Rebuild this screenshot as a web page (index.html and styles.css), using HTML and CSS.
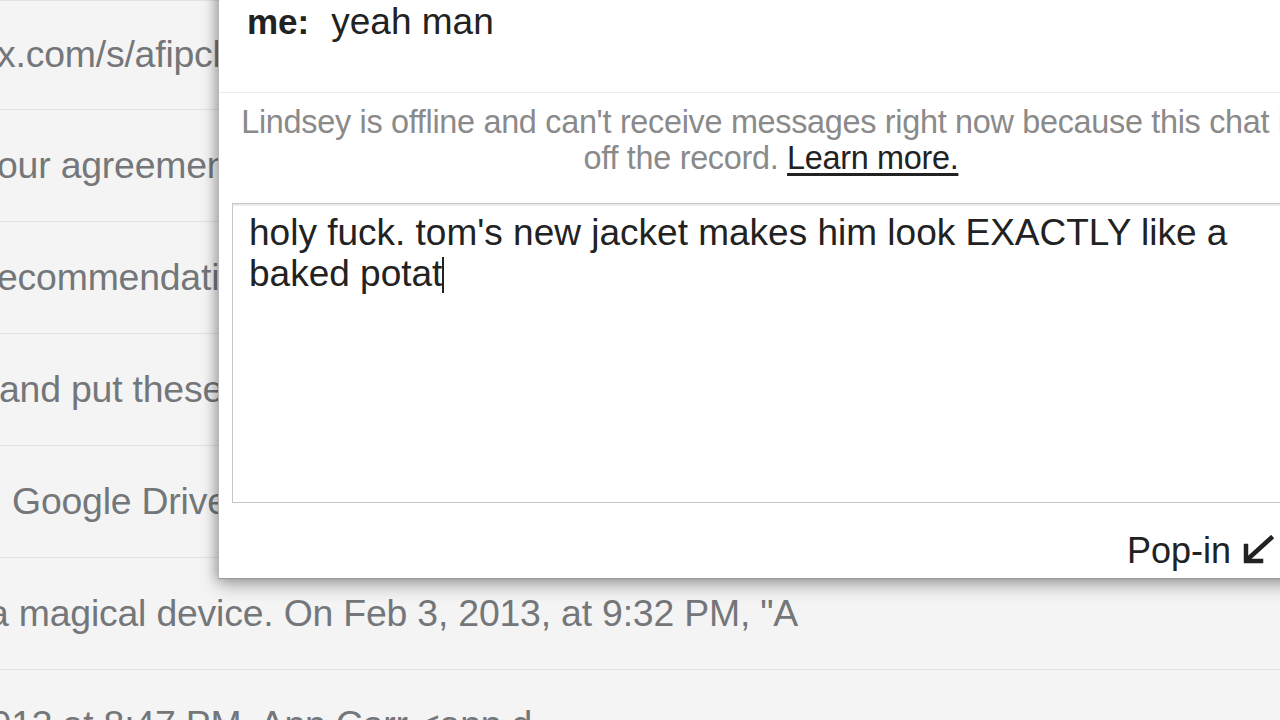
FILE: index.html
```html
<!DOCTYPE html>
<html lang="en">
<head>
<meta charset="utf-8">
<title>Chat</title>
<link rel="stylesheet" href="styles.css">
</head>
<body>
<div class="inbox">
  <div class="row row-first"><span class="snippet s1">x.com/s/afipcle8dkj2</span></div>
  <div class="row"><span class="snippet s2">our agreement with us</span></div>
  <div class="row"><span class="snippet s3">ecommendations for you</span></div>
  <div class="row"><span class="snippet s4">and put these in the folder</span></div>
  <div class="row"><span class="snippet s5">Google Drive</span></div>
  <div class="row"><span class="snippet s6">a magical device. On Feb 3, 2013, at 9:32 PM, "A</span></div>
  <div class="row row-last"><span class="snippet s7">2013 at 8:47 PM, Ann Corr &lt;ann.d</span></div>
</div>

<div class="chat">
  <div class="msg"><b class="who">me:</b><span class="said">yeah man</span></div>
  <div class="notice">Lindsey is offline and can't receive messages right now because this chat is<br>off the record. <a class="learn" href="#">Learn more.</a></div>
  <div class="input">holy fuck. tom's new jacket makes him look EXACTLY like a baked potat<span class="caret"></span></div>
  <div class="footer">
    <span class="popin">Pop-in</span>
    <svg class="popin-icon" width="34" height="30" viewBox="0 0 34 30" aria-hidden="true">
      <path d="M30 3 L8 23" stroke="#222" stroke-width="4.5" stroke-linecap="square" fill="none"/>
      <path d="M5 11 L5 26 L20 26" stroke="#222" stroke-width="4.5" stroke-linecap="square" stroke-linejoin="miter" fill="none"/>
    </svg>
  </div>
</div>
</body>
</html>
```
FILE: styles.css
```css
html, body {
  margin: 0;
  padding: 0;
}
body {
  width: 1280px;
  height: 720px;
  overflow: hidden;
  position: relative;
  background: #f4f4f4;
  font-family: "Liberation Sans", Arial, Helvetica, sans-serif;
}

.inbox {
  display: flex;
  flex-direction: column;
  height: 720px;
  overflow: hidden;
}
.row {
  flex: none;
  height: 111px;
  border-bottom: 1px solid #e2e2e2;
  display: flex;
  align-items: center;
  overflow: hidden;
  white-space: nowrap;
}
.row-first {
  height: 109px;
  box-shadow: inset 0 5px 0 -4px #e2e2e2;
}
.row-last {
  height: 50px;
  border-bottom: none;
  align-items: flex-start;
  padding-top: 33px;
  box-sizing: border-box;
}
.snippet {
  font-size: 37.4px;
  color: #74777a;
  letter-spacing: -0.2px;
}
.s1 { margin-left: -3px; }
.s2 { margin-left: -3px; }
.s3 { margin-left: -3px; }
.s4 { margin-left: -1px; }
.s5 { margin-left: 12px; }
.s6 { margin-left: -12px; }
.s7 { margin-left: -30px; }

.chat {
  position: absolute;
  left: 218px;
  top: -20px;
  width: 1104px;
  background: #fff;
  border: 1px solid #b8b8b8;
  border-bottom-color: #9a9a9a;
  box-shadow: 0 6px 16px rgba(0, 0, 0, 0.32), -3px 0 10px rgba(0, 0, 0, 0.15);
  display: flex;
  flex-direction: column;
}

.msg {
  padding: 21px 0 0 28px;
  height: 112px;
  box-sizing: border-box;
  font-size: 35px;
  line-height: 40px;
  color: #222;
  border-bottom: 1px solid #ececec;
}
.who {
  font-weight: bold;
  margin-right: 22px;
}
.said {
  font-size: 37px;
}

.notice {
  padding-top: 11px;
  text-align: center;
  font-size: 32.4px;
  line-height: 36px;
  color: #8a8a8a;
  letter-spacing: -0.3px;
}
.learn {
  color: #222;
  text-decoration: underline;
  text-underline-offset: 4px;
}

.input {
  margin: 27px 14px 0 13px;
  height: 300px;
  box-sizing: border-box;
  border: 1px solid #c6c6c6;
  box-shadow: inset 0 5px 0 -3px #ececec;
  padding: 8px 18px 0 16px;
  font-size: 37px;
  line-height: 41px;
  color: #222;
}
.caret {
  display: inline-block;
  width: 2px;
  height: 36px;
  background: #222;
  vertical-align: -7px;
}

.footer {
  height: 75px;
  box-sizing: border-box;
  display: flex;
  align-items: flex-end;
  justify-content: flex-end;
  gap: 10px;
  padding: 0 48px 7px 0;
}
.popin {
  font-size: 36px;
  line-height: 41px;
  color: #222;
}
.popin-icon {
  display: block;
  margin-bottom: 6px;
}
```
